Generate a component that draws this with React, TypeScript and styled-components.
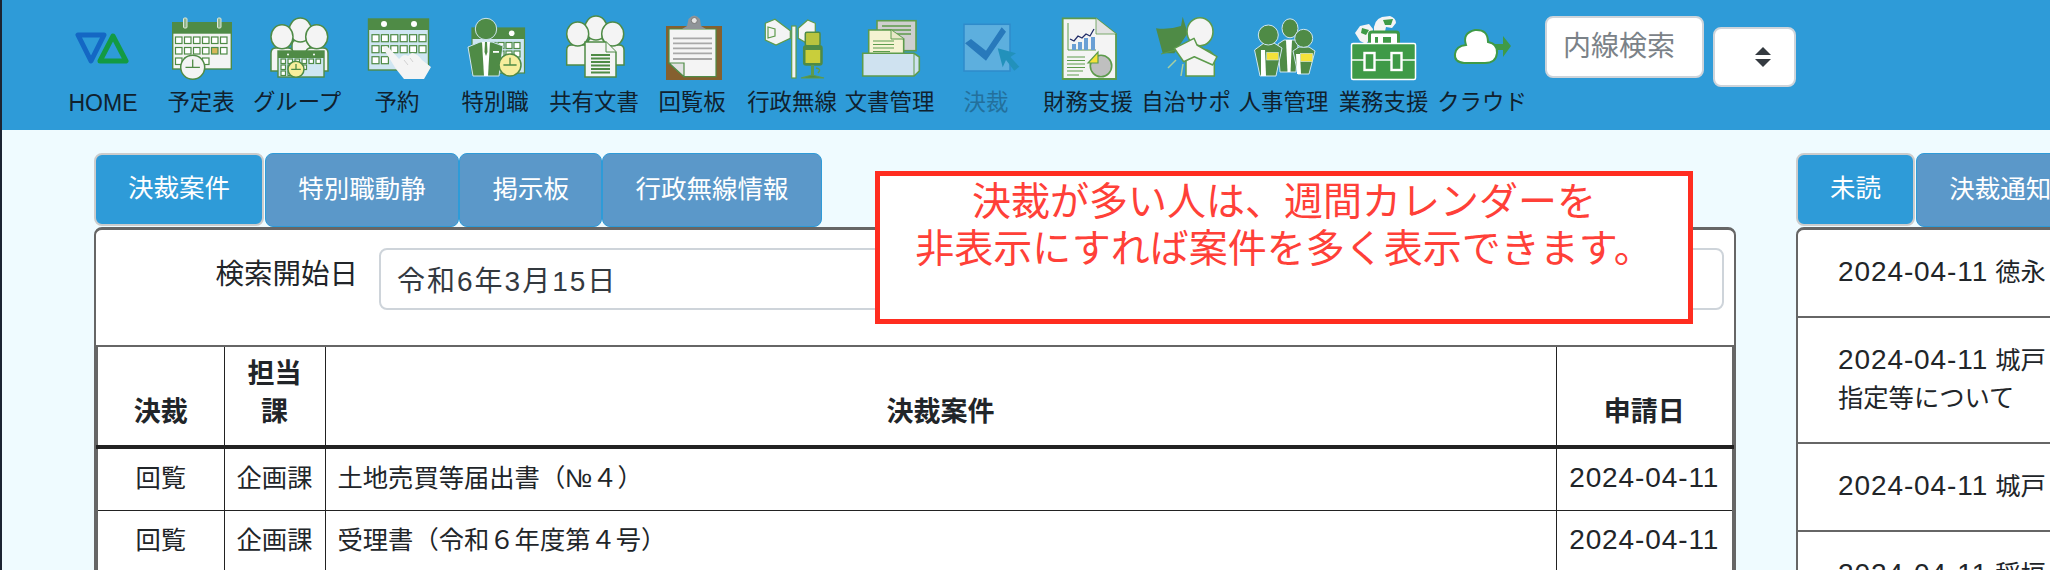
import React from 'react';
import styled, { createGlobalStyle } from 'styled-components';

const GlobalStyle = createGlobalStyle`
  html, body {
    margin: 0;
    height: 570px;
    overflow: hidden;
    background: #effbff;
    font-family: "Liberation Sans", "Noto Sans CJK JP", sans-serif;
    color: #212529;
  }
  body { border-left: 2px solid #1b2433; }
  * { box-sizing: border-box; }
`;

const Header = styled.header`
  display: flex;
  align-items: flex-start;
  height: 130px;
  padding-left: 52px;
  background: #2e9bd8;
`;

const NavItem = styled.a<{ $offset: number; $dim?: boolean }>`
  display: flex;
  flex: none;
  flex-direction: column;
  align-items: center;
  width: 98px;
  margin-left: ${p => p.$offset}px;
  padding-top: 14px;
  color: #10212e;
  font-size: 22.4px;
  line-height: 38px;
  white-space: nowrap;
  opacity: ${p => (p.$dim ? 0.35 : 1)};
  svg { display: block; }
`;

const NavLabel = styled.span<{ $nudge: number; $latin?: boolean }>`
  margin-left: ${p => p.$nudge}px;
  font-size: ${p => (p.$latin ? 23 : 22.4)}px;
`;

const SearchInput = styled.input`
  flex: none;
  width: 159px;
  height: 62px;
  margin: 16px 0 0 18px;
  padding: 0 16px;
  border: 2px solid #ced4da;
  border-radius: 8px;
  background: #fff;
  font: inherit;
  font-size: 28px;
  &::placeholder { color: #7b8288; opacity: 1; }
`;

const SortButton = styled.button`
  display: flex;
  flex: none;
  align-items: center;
  justify-content: center;
  width: 83px;
  height: 60px;
  margin: 27px 0 0 9px;
  padding: 0 0 0 16px;
  border: 2px solid #ced4da;
  border-radius: 8px;
  background: #fff;
`;

const Main = styled.main`
  position: relative;
  display: flex;
  gap: 60px;
  height: 440px;
  padding: 23px 0 0 92px;
  overflow: hidden;
`;

const LeftColumn = styled.section`
  flex: none;
  width: 1642px;
`;

const RightColumn = styled.section`
  flex: none;
  width: 600px;
`;

const Tabs = styled.div`
  display: flex;
  height: 74px;
`;

const Tab = styled.div<{ $active?: boolean }>`
  display: flex;
  flex: none;
  align-items: center;
  height: ${p => (p.$active ? 73 : 74)}px;
  padding: 0 ${p => (p.$active ? 32 : 32.3)}px 8px;
  margin-right: ${p => (p.$active ? 1 : 0)}px;
  border: ${p => (p.$active ? '2px solid #cccccc' : '1px solid #2e9bd8')};
  border-radius: 8px;
  background: ${p => (p.$active ? '#2e9bd8' : '#5b98c9')};
  color: #fff;
  font-size: 25.5px;
  white-space: nowrap;
`;

const Panel = styled.div`
  height: 400px;
  border: 2px solid #666;
  border-top-width: 3px;
  border-radius: 8px 8px 0 0;
  background: #fff;
`;

const FormRow = styled.div`
  display: flex;
  align-items: flex-start;
  height: 115px;
  padding: 18px 10px 0 0;
`;

const FormLabel = styled.label`
  flex: none;
  width: 262px;
  padding-top: 5px;
  font-size: 28.5px;
  line-height: 42px;
  text-align: right;
`;

const FormInput = styled.input`
  flex: 1;
  min-width: 0;
  height: 62px;
  margin-left: 21px;
  padding: 0 16px;
  border: 2px solid #ced4da;
  border-radius: 8px;
  background: #fff;
  color: #33393f;
  font: inherit;
  font-size: 28px;
  letter-spacing: 2px;
`;

const Table = styled.table`
  width: 100%;
  table-layout: fixed;
  border-collapse: collapse;
  border-top: 2px solid #666;
  border-left: 2px solid #666;
  border-right: 2px solid #666;
  font-size: 25.3px;
  line-height: 38px;
`;

const Th = styled.th<{ $w?: number }>`
  width: ${p => (p.$w ? `${p.$w}px` : 'auto')};
  padding: 8px 0 14px;
  border-right: 1px solid #222;
  border-bottom: 4px solid #222;
  font-size: 27px;
  font-weight: 700;
  text-align: center;
  vertical-align: bottom;
  &:last-child { border-right: 0; }
`;

const Td = styled.td<{ $left?: boolean }>`
  padding: 10px ${p => (p.$left ? 12 : 0)}px 13px;
  border-right: 1px solid #222;
  border-bottom: 1px solid #222;
  text-align: ${p => (p.$left ? 'left' : 'center')};
  white-space: nowrap;
  &:last-child { border-right: 0; }
`;

const DateText = styled.span`
  font-size: 28px;
  letter-spacing: 0.9px;
`;

const NoticeRow = styled.div`
  padding: 23px 40px 25px;
  border-bottom: 2px solid #666;
  font-size: 25.3px;
  line-height: 38px;
  white-space: nowrap;
`;

const Callout = styled.div`
  position: absolute;
  top: 41px;
  left: 873px;
  width: 818px;
  height: 153px;
  padding-top: 3px;
  border: 5px solid #ff2d20;
  background: #fff;
  color: #ff4038;
  font-size: 39px;
  line-height: 46.5px;
  text-align: center;
  white-space: nowrap;
`;

const G = '#4f8b46';
const LG = '#5d9b4c';
const PAPER = '#f4f4f4';
const SKY = '#cfe6f2';
const YEL = '#f7ee9c';

const Cells: React.FC<{ x: number; y: number; cols: number; rows: number; size: number; px: number; py: number; skip?: string[]; gold?: string }> = ({ x, y, cols, rows, size, px, py, skip = [], gold }) => (
  <>
    {Array.from({ length: rows * cols }, (_, i) => {
      const c = i % cols;
      const r = Math.floor(i / cols);
      const key = `${r}-${c}`;
      if (skip.includes(key)) return null;
      return <rect key={key} x={x + c * px} y={y + r * py} width={size} height={size} fill={gold === key ? '#d8b85a' : '#fff'} stroke={G} strokeWidth={1.2} />;
    })}
  </>
);

const Clock: React.FC<{ cx: number; cy: number; r: number; fill: string }> = ({ cx, cy, r, fill }) => (
  <g>
    <circle cx={cx} cy={cy} r={r} fill={fill} stroke={G} strokeWidth={1.5} />
    <path d={`M${cx} ${cy - r * 0.65}V${cy}H${cx + r * 0.6}M${cx - r * 0.6} ${cy}H${cx}`} fill="none" stroke={G} strokeWidth={1.3} />
  </g>
);

const Person: React.FC<{ cx: number; cy: number; rx: number; ry: number; x: number; y: number; w: number; h: number }> = ({ cx, cy, rx, ry, x, y, w, h }) => (
  <g fill={PAPER} stroke={G} strokeWidth={1.5}>
    <path d={`M${x} ${y + h}V${y + 5}Q${x} ${y} ${x + 5} ${y}H${x + w - 5}Q${x + w} ${y} ${x + w} ${y + 5}V${y + h}Z`} />
    <ellipse cx={cx} cy={cy} rx={rx} ry={ry} />
  </g>
);

const HomeIcon = () => (
  <g fill="none" strokeWidth={5} strokeLinejoin="round">
    <path d="M20 21H46L33 47Z" stroke="#1467c4" />
    <path d="M55 22L68 47H42Z" stroke="#139a43" />
  </g>
);

const ScheduleIcon = () => (
  <g>
    <rect x={16} y={8} width={60} height={11} fill={G} />
    <rect x={16.7} y={19} width={58.6} height={36} fill={PAPER} stroke={G} strokeWidth={1.4} />
    <rect x={27.5} y={4} width={3.5} height={10} rx={1} fill="#8fb58a" stroke="#dfe8dc" />
    <rect x={61.5} y={4} width={3.5} height={10} rx={1} fill="#8fb58a" stroke="#dfe8dc" />
    <Cells x={19.5} y={23} cols={6} rows={3} size={6.5} px={9} py={10.5} gold="1-4" skip={['2-4', '2-5']} />
    <Clock cx={36.7} cy={53.3} r={12} fill={PAPER} />
  </g>
);

const GroupIcon = () => (
  <g>
    <Person cx={48.3} cy={16} rx={11} ry={12} x={40} y={26} w={18} h={14} />
    <Person cx={30} cy={22.7} rx={11} ry={12} x={19} y={34} w={22} h={23} />
    <Person cx={64.7} cy={22.7} rx={11} ry={12} x={54} y={34} w={22} h={23} />
    <rect x={26} y={37} width={46} height={26} fill={SKY} stroke={G} strokeWidth={1.4} />
    <rect x={26} y={37} width={46} height={7} fill={G} />
    <circle cx={36} cy={40.5} r={1} fill="#fff" />
    <circle cx={62} cy={40.5} r={1} fill="#fff" />
    <Cells x={29} y={45} cols={6} rows={2} size={4.5} px={7} py={6} skip={['1-4', '1-5']} />
    <Cells x={29} y={57} cols={3} rows={1} size={4.5} px={7} py={6} />
    <Clock cx={44} cy={55.3} r={8} fill={YEL} />
  </g>
);

const BookingIcon = () => (
  <g>
    <rect x={16.5} y={5} width={60} height={51} fill={SKY} stroke={G} strokeWidth={1.4} />
    <rect x={16} y={5} width={61} height={11} fill={G} />
    <circle cx={32} cy={10} r={3} fill="#fff" />
    <circle cx={62} cy={10} r={3} fill="#fff" />
    <Cells x={20} y={20.7} cols={6} rows={3} size={7} px={9.4} py={11} skip={['2-2', '2-3', '2-4', '2-5']} />
    <path d="M31 34Q34 30 38 35L47 45L50 42Q53 40 56 42L60 39Q66 40 70 46L79 53L72 65H52L44 55Z" fill={PAPER} />
    <path d="M52 46L56 51M58 44L61 48" stroke="#c9c9c9" strokeWidth={0.8} fill="none" />
  </g>
);

const SpecialIcon = () => (
  <g>
    <rect x={23} y={14} width={52.5} height={45} fill={SKY} stroke={G} strokeWidth={1.2} />
    <rect x={23} y={14} width={52.5} height={11} fill={G} />
    <circle cx={62.7} cy={19.3} r={2.8} fill="#fff" />
    <Cells x={41} y={28.5} cols={4} rows={3} size={6} px={8} py={8.5} skip={['2-3']} />
    <circle cx={37} cy={15} r={10.7} fill={G} stroke={SKY} strokeWidth={1} />
    <path d="M19 33L31 28H43L54 32L50 62H24Z" fill={G} stroke={SKY} strokeWidth={1} />
    <path d="M33 28H41L39 62H35Z" fill="#fff" />
    <path d="M36 28H38L38.5 38L37 42L35.5 38Z" fill={G} />
    <rect x={44} y={37} width={6} height={1.8} fill="#fff" />
    <Clock cx={61} cy={51} r={11} fill={YEL} />
  </g>
);

const DocsIcon = () => (
  <g>
    <Person cx={50} cy={14} rx={11} ry={12} x={42} y={24} w={16} h={10} />
    <Person cx={31.7} cy={20} rx={11} ry={12} x={20.7} y={31} w={22} h={20} />
    <Person cx={66.7} cy={20} rx={11} ry={12} x={56} y={31} w={22} h={20} />
    <path d="M39 28H60L70 38V63H39Z" fill={PAPER} stroke={G} strokeWidth={1.5} />
    <path d="M60 28V38H70" fill={PAPER} stroke={G} strokeWidth={1} />
    <path d="M45 41H64M45 44.5H64M45 48H64M45 51.5H64M45 55H64M45 58.5H64" stroke={G} strokeWidth={1.8} />
  </g>
);

const BoardIcon = () => (
  <g>
    <rect x={25} y={12} width={56} height={54} fill="#85602f" />
    <path d="M28 15H75V62.7H43L28 49Z" fill={PAPER} stroke={G} strokeWidth={1.2} />
    <path d="M28 49H43V62.7Z" fill="#e2e2e2" stroke={G} strokeWidth={1.2} />
    <path d="M32 24.3H71M32 29.3H71M32 34.3H71M32 39.3H71M32 45H71" stroke="#a8a8a8" strokeWidth={1.8} />
    <path d="M41 15L46 12L47.5 5Q53.3 -2 59 5L60 12L65 15Z" fill="#8f9499" />
    <circle cx={53.3} cy={6.5} r={3} fill="#e5e5e5" stroke="#777" />
  </g>
);

const RadioIcon = () => (
  <g stroke={LG} strokeWidth={1.2}>
    <path d="M19.3 9.3L29 5.3L44.3 16.7V24.3L30 31L19.3 26Z" fill={PAPER} />
    <path d="M22 13L29 15V22L22 24Z" fill="none" />
    <rect x={45.7} y={12} width={4.3} height={52} fill={PAPER} />
    <path d="M52.3 14.3L61.7 6L69.3 9.3V24.3L61 29.3L52.3 24.3Z" fill={PAPER} />
    <rect x={59.3} y={18.3} width={14.7} height={13.4} rx={1.5} fill="#b9c43f" stroke={G} strokeWidth={1.5} />
    <rect x={57.7} y={31.7} width={18.3} height={19.3} rx={2.5} fill="#4f8b46" stroke={G} strokeWidth={1.5} />
    <rect x={59.5} y={36} width={14.7} height={13} fill="#c9ce3b" stroke="none" />
    <path d="M66.5 51V62" strokeWidth={3} fill="none" />
    <path d="M70 54Q76 55 72 59" fill="none" strokeWidth={1.5} />
    <path d="M55 64H78L66 61Z" fill={G} />
  </g>
);

const ManageIcon = () => (
  <g stroke={LG} strokeWidth={1.6}>
    <rect x={33} y={6.7} width={39} height={30} fill="#cfcfcf" />
    <path d="M38 12H67M38 16H67M38 20H67" strokeWidth={1.3} />
    <path d="M24.7 16H47L59.7 25V41H24.7Z" fill="#f5f3d2" />
    <path d="M47 16V25H59.7" fill="#e8e8c8" strokeWidth={1} />
    <path d="M29 27H50M29 30.5H50M29 34H50M29 37.5H46" strokeWidth={1.2} />
    <path d="M18.7 39.3H70L75.3 43V57L70 62H18.7Z" fill="#cfe2f0" />
    <path d="M70 39.3V62" strokeWidth={1} />
  </g>
);

const ApproveIcon = () => (
  <g>
    <rect x={23} y={10.3} width={46} height={46.7} fill="#b4d4ea" stroke="#2f6fb5" strokeWidth={1.5} />
    <path d="M24 29.3L30 25L45 36.7L60.7 13.3L65 17.7L45 46.7Z" fill="#1d3b86" />
    <path d="M56.7 34.3L75 39.3L69.3 43L78.3 52.7L73.3 56.7L65 46L61.7 53.3Z" fill="#0e7f86" />
  </g>
);

const FinanceIcon = () => (
  <g>
    <path d="M19.7 4.3H53L73 20V65H19.7Z" fill={PAPER} stroke={LG} strokeWidth={1.8} />
    <path d="M53 4.3V20H73" fill="#e2e2e2" stroke={LG} strokeWidth={0.8} />
    <path d="M25 9V36H53" fill="none" stroke={LG} strokeWidth={1} />
    <rect x={29} y={30} width={4} height={6} fill="#6a9fd4" />
    <rect x={35} y={28} width={4} height={8} fill="#6a9fd4" />
    <rect x={41} y={24} width={4} height={12} fill="#6a9fd4" />
    <rect x={48} y={23} width={4} height={13} fill="#6a9fd4" />
    <path d="M27 25L31 27L35 22L39 24L43 20L47 22L51 15" fill="none" stroke="#1f2a66" strokeWidth={1.3} />
    <path d="M24 43H42M24 46.5H42M24 50H42M24 53.5H42M24 57H40M24 61H36" stroke={LG} strokeWidth={1.1} />
    <circle cx={58} cy={52} r={10.7} fill="#bfbfbf" stroke={LG} strokeWidth={1.6} />
    <path d="M45 49L55 38V49Z" fill="#f4e23a" stroke={LG} strokeWidth={1.2} />
  </g>
);

const CivicIcon = () => (
  <g>
    <path d="M15 14.3Q28 16 40 12L41.7 2.7L46.7 19.3L33.3 39.3H21.7Z" fill={G} />
    <path d="M20 40L56 30" stroke={LG} strokeWidth={1.2} />
    <path d="M45 62V45L62 36H66Q73.3 38 73.3 46V62Z" fill={PAPER} stroke={LG} strokeWidth={1.5} />
    <ellipse cx={59} cy={17.7} rx={13} ry={14} fill={PAPER} stroke={LG} strokeWidth={1.6} />
    <path d="M33.3 34.3L53 24.3L56 31L76 42.7L71.7 51L53.3 42.7L42.7 47.7Z" fill={PAPER} stroke={LG} strokeWidth={1.5} strokeLinejoin="round" />
    <path d="M27 54L35 46M40 62L42 50" stroke="#a9cfa0" strokeWidth={1.5} />
  </g>
);

const StaffIcon = () => (
  <g stroke={SKY} strokeWidth={1}>
    <path d="M40 30L46 26H58L60 30L58 58H42Z" fill={G} />
    <path d="M48 26H54L52.5 58H49.5Z" fill="#fff" stroke="none" />
    <ellipse cx={52} cy={14.3} rx={8} ry={9.5} fill={G} />
    <path d="M16.5 36L26 29H36L44 34L38 62H22Z" fill={G} />
    <path d="M23 36H27L28 62H23Z" fill="#fff" stroke="none" />
    <circle cx={30.3} cy={21} r={10} fill={G} />
    <path d="M55 37L61 33H71L77 37L71 60H60Z" fill={G} />
    <path d="M58 40H62L63 60H59Z" fill="#fff" stroke="none" />
    <circle cx={65.7} cy={24.3} r={9} fill={G} />
    <rect x={28.7} y={38.3} width={11.6} height={7.7} fill="#f4e23a" strokeWidth={0.6} />
    <rect x={62.3} y={39.3} width={12.4} height={8.4} fill="#f4e23a" strokeWidth={0.6} />
  </g>
);

const WorkIcon = () => (
  <g>
    <path d="M38 18Q37 6 46 3L54 2Q60 4 60 9L56 14L50 13L48 22Z" fill={PAPER} />
    <path d="M47 6L57 5L55 11H49Z" fill="#3f9a47" />
    <path d="M19 19L24 12L33 10L37 15L36 22L30 30L24 27Z" fill={PAPER} />
    <path d="M26 14L33 16L30 21L25 19Z" fill="#3f9a47" />
    <rect x={33.5} y={18} width={29} height={14} rx={2.5} fill="#fff" stroke="#3f9a47" strokeWidth={3} />
    <path d="M39 23H42V30H39ZM47 23H55V30H47Z" fill="#3f9a47" />
    <rect x={15.5} y={29.5} width={64} height={36} rx={1.5} fill="#3f9a47" stroke="#fff" strokeWidth={1.5} />
    <path d="M15 46H80" stroke="#fff" strokeWidth={1.5} />
    <rect x={28.5} y={39} width={10} height={17} fill="#3f9a47" stroke="#fff" strokeWidth={2.4} />
    <rect x={55.5} y={39} width={10} height={17} fill="#3f9a47" stroke="#fff" strokeWidth={2.4} />
  </g>
);

const CloudIcon = () => (
  <g>
    <path d="M60 30H70V22L78 32L70 43V36H60Z" fill="#3f9a47" />
    <path d="M33 31Q29 19 42 16Q55 15 55 28Q65 30 64 39Q63 49 52 49H31Q21 48 22 40Q23 32 33 31Z" fill="#fff" stroke="#3f9a47" strokeWidth={2} />
  </g>
);

interface NavEntry {
  label: string;
  offset: number;
  nudge: number;
  icon: React.ReactNode;
  dim?: boolean;
  latin?: boolean;
}

const navEntries: NavEntry[] = [
  { label: 'HOME', offset: 0, nudge: 0, icon: <HomeIcon />, latin: true },
  { label: '予定表', offset: 0, nudge: 0, icon: <ScheduleIcon /> },
  { label: 'グループ', offset: -2, nudge: 0, icon: <GroupIcon /> },
  { label: '予約', offset: 2, nudge: 0, icon: <BookingIcon /> },
  { label: '特別職', offset: -1, nudge: 2, icon: <SpecialIcon /> },
  { label: '共有文書', offset: -1, nudge: 6, icon: <DocsIcon /> },
  { label: '回覧板', offset: -3, nudge: 12, icon: <BoardIcon /> },
  { label: '行政無線', offset: 7, nudge: 2, icon: <RadioIcon /> },
  { label: '文書管理', offset: 0, nudge: 1, icon: <ManageIcon /> },
  { label: '決裁', offset: -1, nudge: 0, icon: <ApproveIcon />, dim: true },
  { label: '財務支援', offset: 4, nudge: 0, icon: <FinanceIcon /> },
  { label: '自治サポ', offset: 0, nudge: 0, icon: <CivicIcon /> },
  { label: '人事管理', offset: -1, nudge: 1, icon: <StaffIcon /> },
  { label: '業務支援', offset: 0, nudge: 5, icon: <WorkIcon /> },
  { label: 'クラウド', offset: -1, nudge: 8, icon: <CloudIcon /> },
];

const leftTabs = [
  { label: '決裁案件', active: true },
  { label: '特別職動静' },
  { label: '掲示板' },
  { label: '行政無線情報' },
];

const approvals = [
  { kind: '回覧', section: '企画課', title: '土地売買等届出書（№４）', date: '2024-04-11' },
  { kind: '回覧', section: '企画課', title: '受理書（令和６年度第４号）', date: '2024-04-11' },
];

const App: React.FC = () => (
  <>
    <GlobalStyle />
    <Header>
      {navEntries.map(entry => (
        <NavItem key={entry.label} $offset={entry.offset} $dim={entry.dim}>
          <svg width={90} height={70} viewBox="0 0 90 70">{entry.icon}</svg>
          <NavLabel $nudge={entry.nudge} $latin={entry.latin}>{entry.label}</NavLabel>
        </NavItem>
      ))}
      <SearchInput placeholder="内線検索" />
      <SortButton aria-label="並び替え">
        <svg width={16} height={20} viewBox="0 0 16 20">
          <path d="M8 0L16 8H0ZM0 12H16L8 20Z" fill="#343a40" />
        </svg>
      </SortButton>
    </Header>
    <Main>
      <LeftColumn>
        <Tabs>
          {leftTabs.map(tab => (
            <Tab key={tab.label} $active={tab.active}>{tab.label}</Tab>
          ))}
        </Tabs>
        <Panel>
          <FormRow>
            <FormLabel>検索開始日</FormLabel>
            <FormInput defaultValue="令和6年3月15日" readOnly />
          </FormRow>
          <Table>
            <thead>
              <tr>
                <Th $w={127}>決裁</Th>
                <Th $w={101}>担当<br />課</Th>
                <Th>決裁案件</Th>
                <Th $w={177}>申請日</Th>
              </tr>
            </thead>
            <tbody>
              {approvals.map(row => (
                <tr key={row.title}>
                  <Td>{row.kind}</Td>
                  <Td>{row.section}</Td>
                  <Td $left>{row.title}</Td>
                  <Td><DateText>{row.date}</DateText></Td>
                </tr>
              ))}
            </tbody>
          </Table>
        </Panel>
      </LeftColumn>
      <RightColumn>
        <Tabs>
          <Tab $active>未読</Tab>
          <Tab>決裁通知</Tab>
        </Tabs>
        <Panel>
          <NoticeRow><DateText>2024-04-11</DateText> 徳永</NoticeRow>
          <NoticeRow><DateText>2024-04-11</DateText> 城戸<br />指定等について</NoticeRow>
          <NoticeRow><DateText>2024-04-11</DateText> 城戸</NoticeRow>
          <NoticeRow><DateText>2024-04-11</DateText> 稲垣</NoticeRow>
        </Panel>
      </RightColumn>
      <Callout>
        決裁が多い人は、週間カレンダーを<br />
        非表示にすれば案件を多く表示できます。
      </Callout>
    </Main>
  </>
);

export default App;
